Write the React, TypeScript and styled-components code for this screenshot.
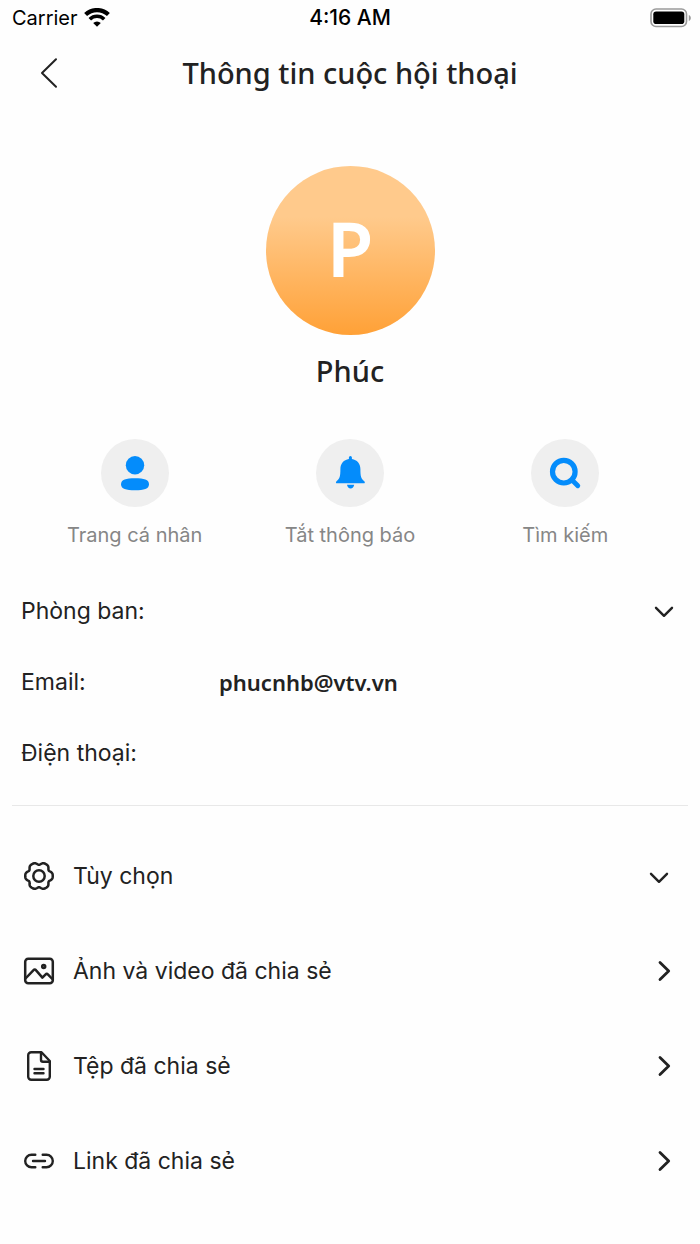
import React from 'react';
import styled, { createGlobalStyle } from 'styled-components';

const ui = `Inter, "Noto Sans", sans-serif`;
const display = `"Noto Sans", "Open Sans", sans-serif`;

const GlobalStyle = createGlobalStyle`
  *, *::before, *::after { box-sizing: border-box; }
  body { margin: 0; background: #fefefe; color: #222; font-family: ${ui}; }
  button { font: inherit; color: inherit; background: none; border: 0; padding: 0; cursor: pointer; }
  h1, h2, dl, dd, ul { margin: 0; padding: 0; }
  svg { display: block; flex: none; }
`;

const Page = styled.div`
  display: flex;
  flex-direction: column;
  min-height: 100vh;
`;

const StatusBar = styled.div`
  display: grid;
  grid-template-columns: 1fr auto 1fr;
  align-items: center;
  height: 36px;
  padding: 0 8px;
  font-size: 20px;
  line-height: 24px;
  color: #000;
`;

const Carrier = styled.div`
  display: flex;
  align-items: center;
  gap: 6px;
  padding-left: 4px;
`;

const Clock = styled.time`
  font-size: 21px;
  font-weight: 500;
`;

const Battery = styled.div`
  justify-self: end;
`;

const Header = styled.header`
  display: grid;
  grid-template-columns: 76px 1fr 76px;
  align-items: center;
  height: 74px;
`;

const BackButton = styled.button`
  display: flex;
  justify-content: center;
  padding: 12px 0 12px 22px;
`;

const Title = styled.h1`
  font: 500 29px/40px ${display};
  text-align: center;
  white-space: nowrap;
`;

const Profile = styled.section`
  display: flex;
  flex-direction: column;
  align-items: center;
  gap: 16px;
  padding-top: 56px;
`;

const Avatar = styled.div`
  display: flex;
  align-items: center;
  justify-content: center;
  width: 169px;
  height: 169px;
  padding-bottom: 6px;
  border-radius: 50%;
  background: linear-gradient(#ffca8c 30%, #ffa137 100%);
  color: #fff;
  font: 600 76px/96px ${display};
`;

const Name = styled.h2`
  font: 500 29px/40px ${display};
`;

const Actions = styled.nav`
  display: grid;
  grid-template-columns: repeat(3, 1fr);
  padding: 48px 27px 0;
`;

const ActionButton = styled.button`
  display: flex;
  flex-direction: column;
  align-items: center;
  gap: 16px;
  color: #868686;
  font-size: 20px;
  line-height: 24px;
`;

const ActionDisc = styled.span`
  width: 68px;
  height: 68px;
  border-radius: 50%;
  background: #efefef;
  color: #048cfb;
`;

const Info = styled.dl`
  display: flex;
  flex-direction: column;
  margin: 28px 12px 0;
  padding-bottom: 17px;
  border-bottom: 1px solid #e8e8e8;
`;

const InfoRow = styled.div`
  display: grid;
  grid-template-columns: 198px 1fr auto;
  align-items: center;
  height: 71px;
  padding: 0 12px 0 9px;
`;

const InfoLabel = styled.dt`
  font-size: 23px;
  line-height: 32px;
`;

const InfoValue = styled.dd`
  font: 600 22px/32px ${display};
`;

const Menu = styled.ul`
  display: flex;
  flex-direction: column;
  list-style: none;
  padding-top: 22px;
`;

const MenuButton = styled.button`
  display: flex;
  align-items: center;
  gap: 17px;
  width: 100%;
  height: 95px;
  padding: 0 25px 0 22px;
  font-size: 23px;
  line-height: 32px;
  text-align: left;
`;

const MenuLabel = styled.span`
  flex: 1;
`;

const Stroke = ({ size, width = 2.3, children }: { size: number; width?: number; children: React.ReactNode }) => (
  <svg width={size} height={size} viewBox={`0 0 ${size} ${size}`} fill="none" stroke="currentColor"
    strokeWidth={width} strokeLinecap="round" strokeLinejoin="round" aria-hidden="true">
    {children}
  </svg>
);

const WifiIcon = () => (
  <svg width="26" height="20" viewBox="0 0 26 20" fill="none" stroke="currentColor" aria-hidden="true">
    <path d="M1.600 6.600a16.500 16.500 0 0 1 22.800 0" strokeWidth="4.200" />
    <path d="M5.800 11.200a10.300 10.300 0 0 1 14.400 0" strokeWidth="3.600" />
    <path d="M13 18.700 9.200 15a5.400 5.400 0 0 1 7.600 0z" fill="currentColor" stroke="none" />
  </svg>
);

const BatteryIcon = () => (
  <svg width="42" height="20" viewBox="0 0 42 20" aria-hidden="true">
    <rect x="1" y="1" width="35.500" height="17.500" rx="5" fill="none" stroke="#9a9a9a" strokeWidth="1.600" />
    <rect x="3.300" y="3.500" width="31" height="12.500" rx="2.800" fill="#000" />
    <path d="M38.800 7v6c1.400-.6 2-1.600 2-3s-.6-2.400-2-3z" fill="#9a9a9a" />
  </svg>
);

const PersonIcon = () => (
  <svg width="68" height="68" viewBox="0 0 68 68" fill="currentColor" aria-hidden="true">
    <circle cx="34" cy="26.300" r="9.200" />
    <path d="M20 45.200c0-4.600 5-6 14-6s14 1.400 14 6-5 6-14 6-14-1.400-14-6z" />
  </svg>
);

const BellIcon = () => (
  <svg width="68" height="68" viewBox="0 0 68 68" fill="currentColor" aria-hidden="true">
    <path d="M32.900 18.400a1.500 1.500 0 0 1 3 0v1.500c5.200.8 8.500 4.700 8.500 10 0 7.500.7 9.600 3.900 12.300.9.800.7 2.100-.5 2.100H21c-1.200 0-1.400-1.300-.5-2.100 3.200-2.700 3.900-4.800 3.900-12.300 0-5.300 3.300-9.200 8.500-10z" />
    <path d="M31 45.800h7.200c-.4 2.300-1.700 3.700-3.600 3.700S31.400 48.100 31 45.800z" />
  </svg>
);

const SearchIcon = () => (
  <svg width="68" height="68" viewBox="0 0 68 68" fill="none" stroke="currentColor" strokeWidth="5.200" strokeLinecap="round" aria-hidden="true">
    <circle cx="32.800" cy="32.700" r="11.300" />
    <path d="m41.500 41.500 5.300 5.300" strokeWidth="4.800" />
  </svg>
);

const gearOutline = Array.from({ length: 120 }, (_, i) => {
  const a = (i * Math.PI) / 60;
  const r = 12.8 + 1.3 * Math.cos(6 * a) - 0.35 * Math.cos(12 * a);
  return `${i ? 'L' : 'M'}${(17 + r * Math.cos(a)).toFixed(2)} ${(17 + r * Math.sin(a)).toFixed(2)}`;
}).join('') + 'Z';

const GearIcon = () => (
  <Stroke size={34} width={2.5}>
    <path d={gearOutline} />
    <circle cx="17" cy="17" r="5.700" />
  </Stroke>
);

const PictureIcon = () => (
  <Stroke size={34} width={2.5}>
    <rect x="3.200" y="4.700" width="27.600" height="24.600" rx="3" />
    <path d="m3.500 24.500 7.800-8.200c1-1 1.900-1 2.800.1l6.300 7.200 3-3c.9-.9 1.800-.9 2.700 0l4.200 4.400" />
    <circle cx="21.700" cy="12.600" r="1.500" />
  </Stroke>
);

const FileIcon = () => (
  <Stroke size={34} width={2.4}>
    <path d="M19.500 3.200H9.200a3 3 0 0 0-3 3v21.600a3 3 0 0 0 3 3h15.600a3 3 0 0 0 3-3V12z" />
    <path d="M19 3.600v7.200a2 2 0 0 0 2 2h6.600M12.500 20h9M12.500 24.300h9" />
  </Stroke>
);

const LinkIcon = () => (
  <Stroke size={34} width={2.4}>
    <path d="M13.300 10.700H9.500a6.300 6.300 0 0 0 0 12.600h3.800M20.700 10.700h3.800a6.300 6.300 0 0 1 0 12.600h-3.800M11 17h12" />
  </Stroke>
);

const ChevronDown = () => (
  <Stroke size={24} width={2.4}><path d="m4 8.800 8 8 8-8" /></Stroke>
);

const ChevronRight = () => (
  <Stroke size={24} width={2.8}><path d="m9 3.500 8.700 8.500L9 20.500" /></Stroke>
);

const DownSlot = styled.span`
  padding: 2px 4px 0 0;
`;

const actions = [
  { label: 'Trang cá nhân', Icon: PersonIcon },
  { label: 'Tắt thông báo', Icon: BellIcon },
  { label: 'Tìm kiếm', Icon: SearchIcon },
];

const menu = [
  { label: 'Tùy chọn', Icon: GearIcon, expandable: true },
  { label: 'Ảnh và video đã chia sẻ', Icon: PictureIcon },
  { label: 'Tệp đã chia sẻ', Icon: FileIcon },
  { label: 'Link đã chia sẻ', Icon: LinkIcon },
];

export default function App() {
  return (
    <Page>
      <GlobalStyle />
      <StatusBar>
        <Carrier>Carrier <WifiIcon /></Carrier>
        <Clock>4:16 AM</Clock>
        <Battery><BatteryIcon /></Battery>
      </StatusBar>
      <Header>
        <BackButton aria-label="Quay lại">
          <svg width="20" height="32" viewBox="0 0 20 32" fill="none" stroke="currentColor" strokeWidth="2" strokeLinecap="round" strokeLinejoin="round" aria-hidden="true">
            <path d="M17 2.300 3 16l14 13.700" />
          </svg>
        </BackButton>
        <Title>Thông tin cuộc hội thoại</Title>
      </Header>
      <main>
        <Profile>
          <Avatar>P</Avatar>
          <Name>Phúc</Name>
        </Profile>
        <Actions>
          {actions.map(({ label, Icon }) => (
            <ActionButton key={label}>
              <ActionDisc><Icon /></ActionDisc>
              {label}
            </ActionButton>
          ))}
        </Actions>
        <Info>
          <InfoRow>
            <InfoLabel>Phòng ban:</InfoLabel>
            <InfoValue />
            <button aria-label="Mở rộng phòng ban"><ChevronDown /></button>
          </InfoRow>
          <InfoRow>
            <InfoLabel>Email:</InfoLabel>
            <InfoValue>phucnhb@vtv.vn</InfoValue>
          </InfoRow>
          <InfoRow>
            <InfoLabel>Điện thoại:</InfoLabel>
            <InfoValue />
          </InfoRow>
        </Info>
        <Menu>
          {menu.map(({ label, Icon, expandable }) => (
            <li key={label}>
              <MenuButton>
                <Icon />
                <MenuLabel>{label}</MenuLabel>
                {expandable ? <DownSlot><ChevronDown /></DownSlot> : <ChevronRight />}
              </MenuButton>
            </li>
          ))}
        </Menu>
      </main>
    </Page>
  );
}
